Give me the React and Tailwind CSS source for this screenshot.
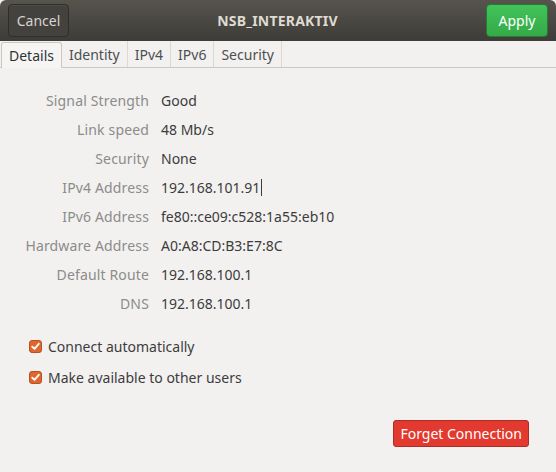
import React from 'react';

const rows = [
  ['Signal Strength', 'Good'],
  ['Link speed', '48 Mb/s'],
  ['Security', 'None'],
  ['IPv4 Address', '192.168.101.91', true],
  ['IPv6 Address', 'fe80::ce09:c528:1a55:eb10'],
  ['Hardware Address', 'A0:A8:CD:B3:E7:8C'],
  ['Default Route', '192.168.100.1'],
  ['DNS', '192.168.100.1'],
];

const tabs = ['Details', 'Identity', 'IPv4', 'IPv6', 'Security'];

const Check = ({ label }) => (
  <label className="flex items-center gap-[6px] h-[31px]">
    <span className="w-[13px] h-[13px] rounded-[3px] bg-[#e0662e] border border-[#b8521f] flex items-center justify-center">
      <svg width="9" height="9" viewBox="0 0 9 9" fill="none">
        <path d="M1.2 4.6 L3.5 6.9 L7.8 1.8" stroke="white" strokeWidth="1.8" strokeLinecap="round" strokeLinejoin="round" />
      </svg>
    </span>
    <span className="text-[#3c3c3c]">{label}</span>
  </label>
);

export default function App() {
  return (
    <div
      className="w-[556px] h-[472px] bg-[#f2f1f0] flex flex-col text-[14px] overflow-hidden"
      style={{ fontFamily: '"Noto Sans", "Open Sans", sans-serif' }}
    >
      {/* header bar */}
      <div className="h-[41px] flex items-center justify-between px-[8px] bg-gradient-to-b from-[#57544e] to-[#3d3c38] rounded-t-[6px]">
        <button className="h-[33px] w-[61px] rounded-[4px] border border-[#2f2e2b] bg-[#44423e] text-[#d6d4cf] shadow-[inset_0_1px_0_rgba(255,255,255,0.06)]">
          Cancel
        </button>
        <div className="text-[#dfdbd2] font-bold tracking-[0.2px]">NSB_INTERAKTIV</div>
        <button className="h-[33px] w-[62px] rounded-[4px] border border-[#2a7a34] bg-gradient-to-b from-[#42c35a] to-[#34aa48] text-white">
          Apply
        </button>
      </div>

      {/* tabs */}
      <div className="h-[27px] flex items-end border-b border-[#cdc7c2] px-[1px]">
        {tabs.map((t, i) =>
          i === 0 ? (
            <div
              key={t}
              className="h-[26px] px-[7px] flex items-center bg-[#f6f5f4] border border-b-0 border-[#cdc7c2] rounded-t-[3px] text-[#2e3436] -mb-px"
            >
              {t}
            </div>
          ) : (
            <div
              key={t}
              className="h-[26px] px-[7px] flex items-center border-r border-[#dcd8d4] text-[#4c4f50]"
            >
              {t}
            </div>
          )
        )}
      </div>

      {/* details */}
      <div className="pt-[18px] flex flex-col">
        {rows.map(([k, v, caret]) => (
          <div key={k} className="flex h-[29px] items-center">
            <div className="w-[149px] text-right text-[#8b8c8b] tracking-[0.15px]">{k}</div>
            <div className="ml-[12px] text-[#3c3c3c] flex items-center">
              {v}
              {caret && <span className="inline-block w-px h-[17px] bg-[#3c3c3c] ml-px" />}
            </div>
          </div>
        ))}
      </div>

      <div className="pl-[29px] pt-[13px] flex flex-col">
        <Check label="Connect automatically" />
        <Check label="Make available to other users" />
      </div>

      <div className="flex justify-end pr-[27px] pt-[27px]">
        <button className="h-[27px] px-[6px] rounded-[3px] border border-[#a83028] bg-[#e3392e] text-white">
          Forget Connection
        </button>
      </div>
    </div>
  );
}
